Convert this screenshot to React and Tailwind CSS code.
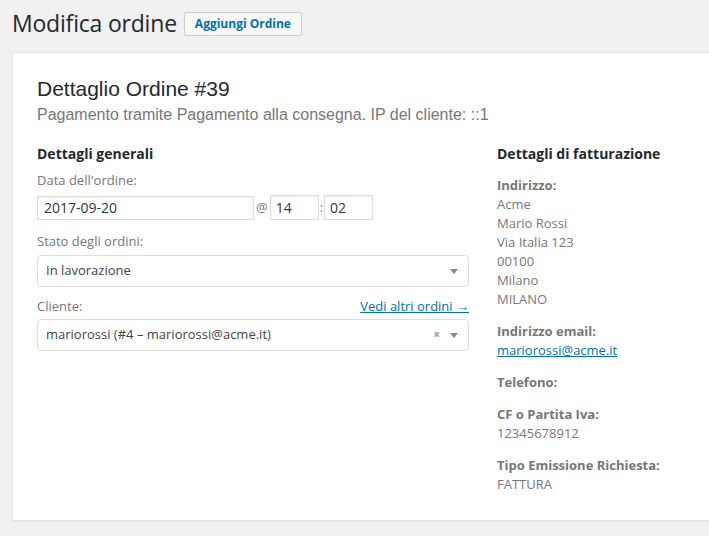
import React from "react";

const ubuntu = { fontFamily: '"Open Sans", "Noto Sans", sans-serif' };

const Field = ({ label, children }) => (
  <div className="mb-[13px]">
    <div className="font-bold">{label}</div>
    {children}
  </div>
);

const Caret = () => (
  <span className="h-0 w-0 border-x-[4px] border-t-[5px] border-x-transparent border-t-[#888]" />
);

export default function App() {
  return (
    <div
      className="min-h-[536px] overflow-hidden bg-[#f1f1f1] pl-[12px] text-[13px] text-[#444]"
      style={ubuntu}
    >
      <div className="flex items-center gap-[7px] pt-[9px] pb-[14px]">
        <h1 className="text-[23px] leading-[29px] tracking-[-0.2px] text-[#23282d]">Modifica ordine</h1>
        <button
          type="button"
          className="h-[24px] rounded-[2px] border border-[#ccc] bg-[#f7f7f7] px-[10px] text-[12px] font-bold text-[#0073aa]"
        >
          Aggiungi Ordine
        </button>
      </div>

      <div className="-mr-[20px] border border-[#e5e5e5] bg-white pt-[22px] pb-[13px] pl-[24px] shadow-[0_1px_1px_rgba(0,0,0,0.04)]">
        <h2
          className="text-[21px] leading-[28px] text-[#23282d]"
          style={{ fontFamily: '"Liberation Sans", Arial, sans-serif' }}
        >
          Dettaglio Ordine #39
        </h2>
        <p
          className="mt-[1px] text-[16px] leading-[22px] text-[#777]"
          style={{ fontFamily: '"Liberation Sans", Arial, sans-serif' }}
        >
          Pagamento tramite Pagamento alla consegna. IP del cliente: ::1
        </p>

        <div className="mt-[18px] flex gap-[28px]">
          <div className="w-[432px]">
            <h3 className="text-[14px] font-bold leading-[20px] text-[#23282d]">Dettagli generali</h3>

            <div className="mt-[7px] leading-[19px] text-[#777]">Data dell'ordine:</div>
            <div className="mt-[5px] flex items-center text-[#32373c]">
              <input
                readOnly
                value="2017-09-20"
                className="h-[24px] w-[217px] border border-[#ddd] px-[6px] text-[14px] shadow-[inset_0_1px_2px_rgba(0,0,0,0.07)] outline-none"
              />
              <span className="mx-[2px] text-[#777]">@</span>
              <input
                readOnly
                value="14"
                className="h-[25px] w-[49px] border border-[#ddd] px-[5px] text-[14px] shadow-[inset_0_1px_2px_rgba(0,0,0,0.07)] outline-none"
              />
              <span className="mx-[1px] text-[#777]">:</span>
              <input
                readOnly
                value="02"
                className="h-[25px] w-[49px] border border-[#ddd] px-[5px] text-[14px] shadow-[inset_0_1px_2px_rgba(0,0,0,0.07)] outline-none"
              />
            </div>

            <div className="mt-[12px] leading-[19px] text-[#777]">Stato degli ordini:</div>
            <div className="mt-[4px] flex h-[32px] items-center justify-between rounded-[4px] border border-[#ddd] pr-[10px] pl-[8px] text-[#444]">
              <span>In lavorazione</span>
              <Caret />
            </div>

            <div className="mt-[10px] flex items-center justify-between leading-[19px]">
              <span className="text-[#777]">Cliente:</span>
              <a href="#" className="text-[#0073aa] underline">
                Vedi altri ordini →
              </a>
            </div>
            <div className="mt-[3px] flex h-[32px] items-center justify-between rounded-[4px] border border-[#ddd] pr-[10px] pl-[8px] text-[#444]">
              <span>mariorossi (#4 – mariorossi@acme.it)</span>
              <span className="flex items-center gap-[10px]">
                <span className="text-[12px] font-bold text-[#999]">×</span>
                <Caret />
              </span>
            </div>
          </div>

          <div className="w-[220px] leading-[19px] text-[#777]">
            <h3 className="text-[14px] font-bold leading-[20px] text-[#23282d]">Dettagli di fatturazione</h3>
            <div className="mt-[12px]">
              <Field label="Indirizzo:">
                <div>Acme</div>
                <div>Mario Rossi</div>
                <div>Via Italia 123</div>
                <div>00100</div>
                <div>Milano</div>
                <div>MILANO</div>
              </Field>
              <Field label="Indirizzo email:">
                <a href="#" className="text-[#0073aa] underline">
                  mariorossi@acme.it
                </a>
              </Field>
              <Field label="Telefono:" />
              <Field label="CF o Partita Iva:">
                <div>12345678912</div>
              </Field>
              <Field label="Tipo Emissione Richiesta:">
                <div>FATTURA</div>
              </Field>
            </div>
          </div>
        </div>
      </div>
    </div>
  );
}
